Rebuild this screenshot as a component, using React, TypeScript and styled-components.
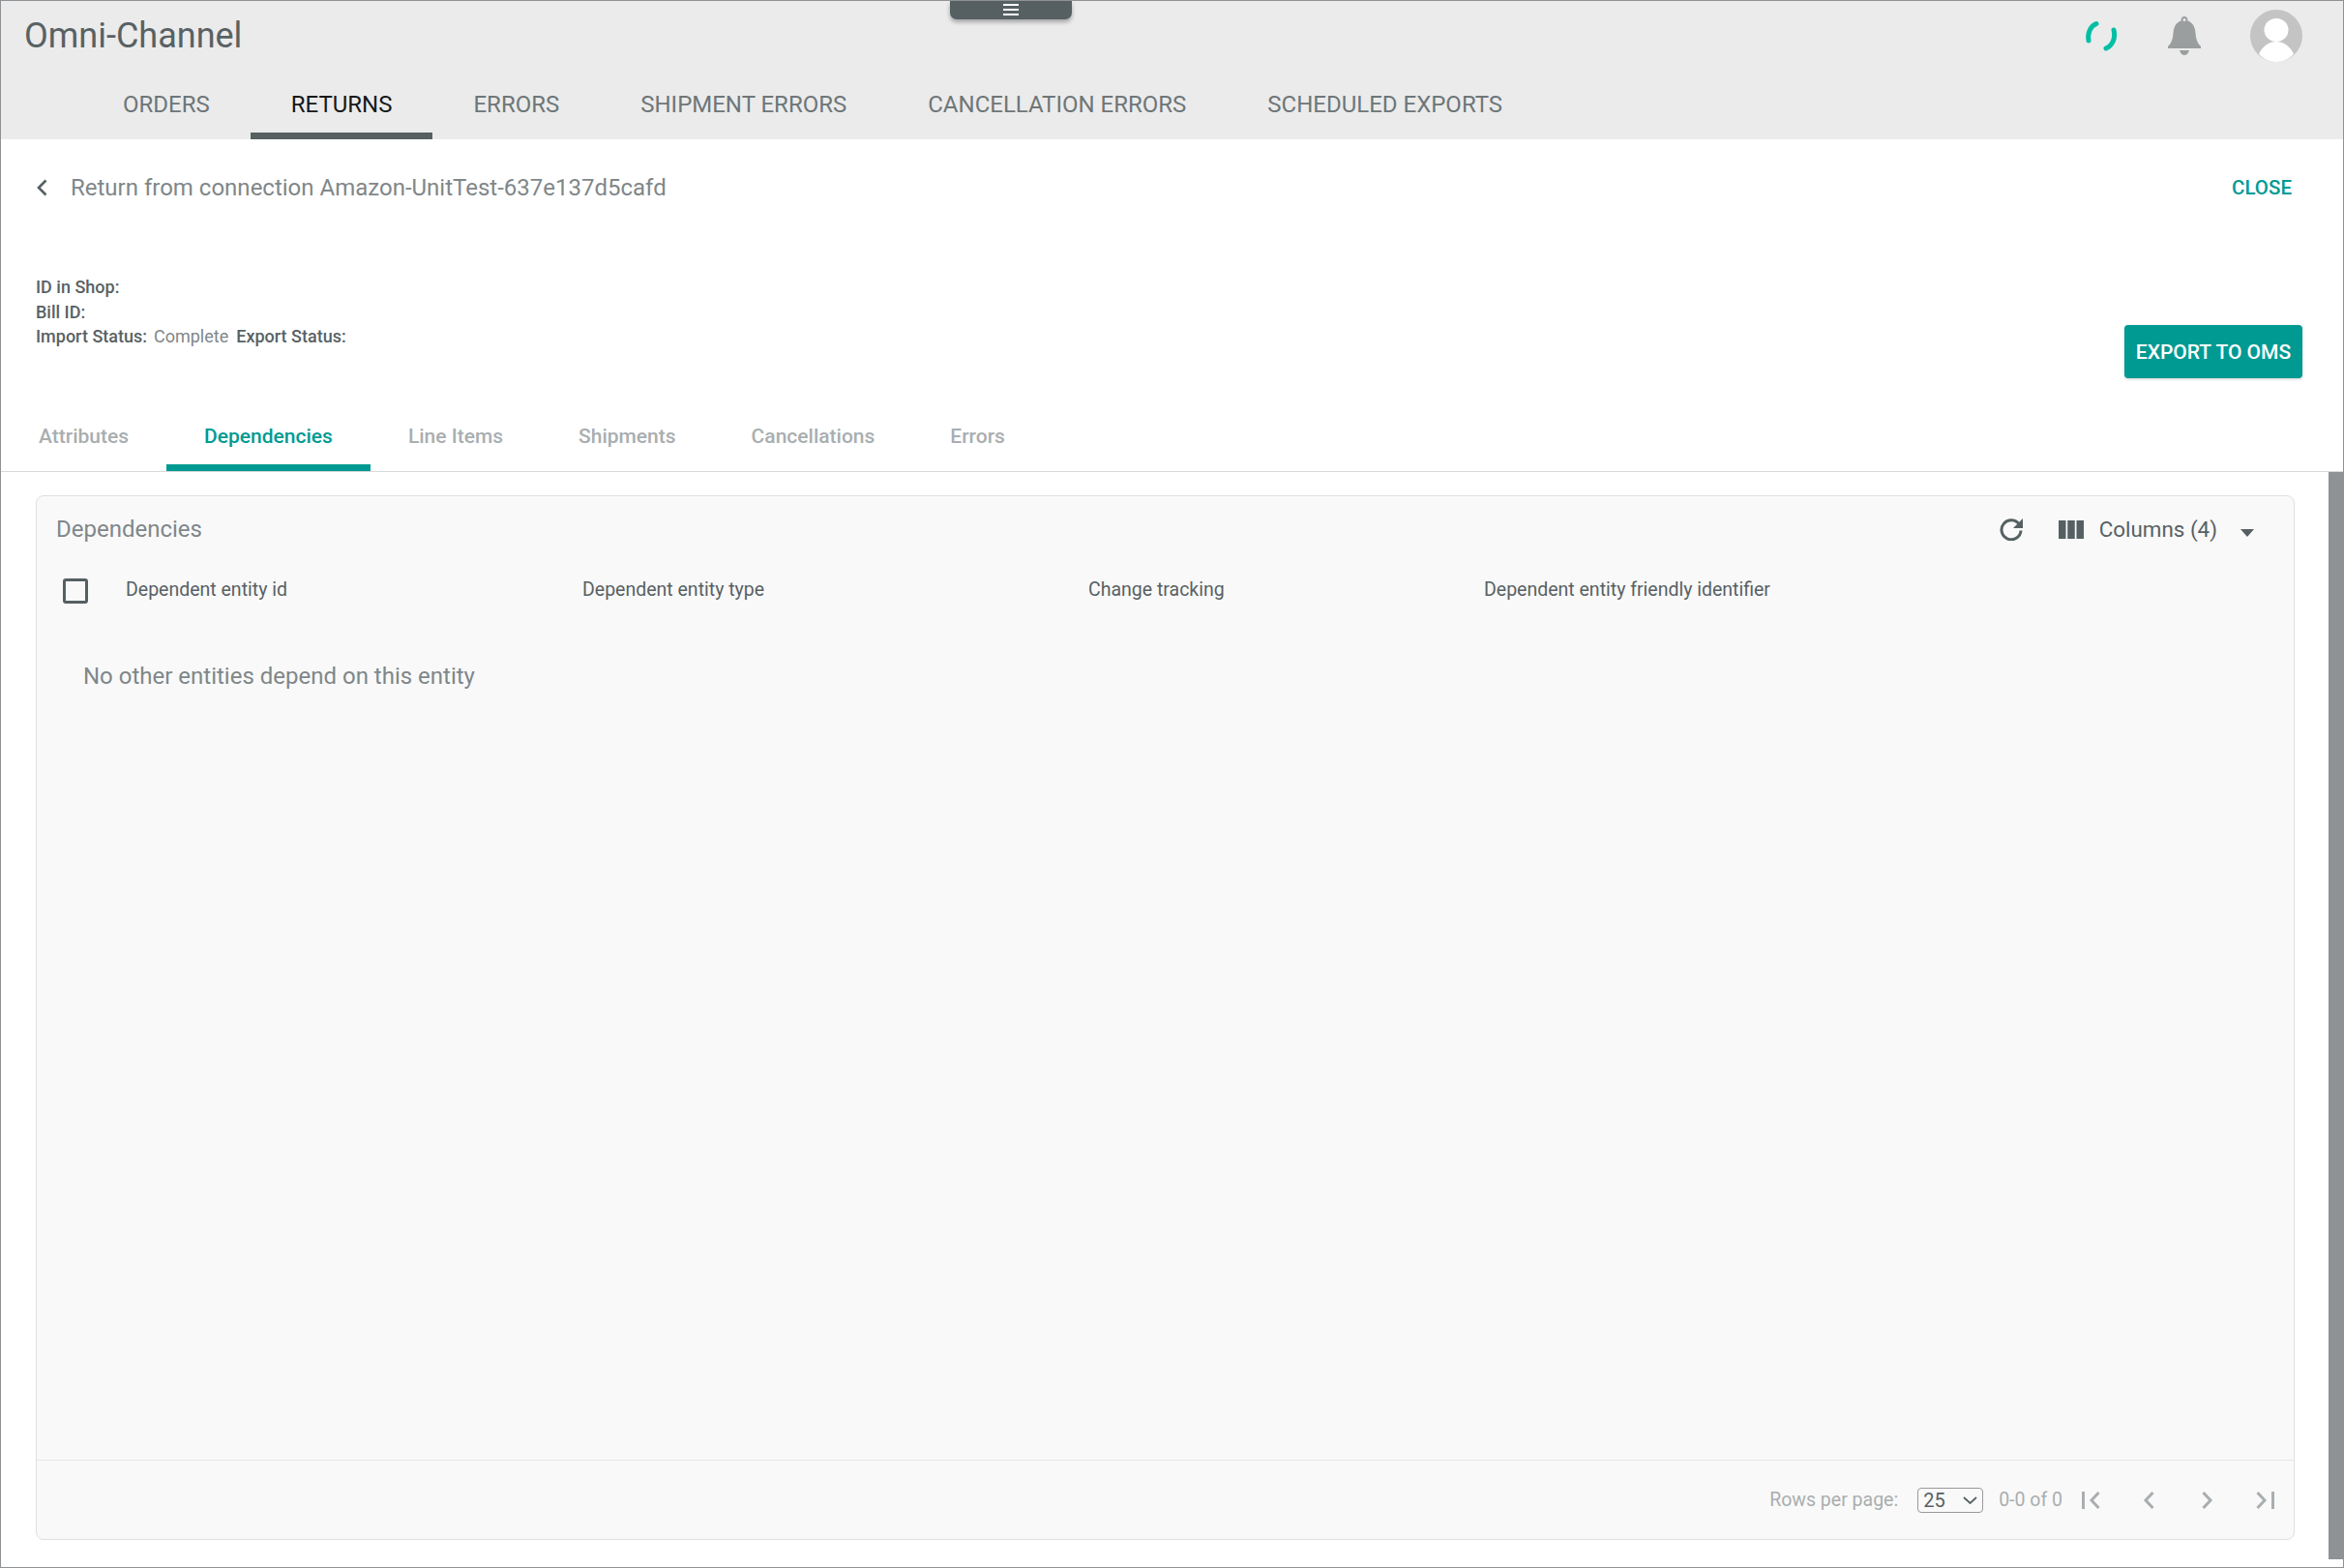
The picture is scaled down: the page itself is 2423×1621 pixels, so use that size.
import styled, { createGlobalStyle } from 'styled-components';

const GlobalStyle = createGlobalStyle`
  html, body {
    margin: 0;
    padding: 0;
    background: #fff;
  }
  body {
    font-family: Roboto, "Liberation Sans", sans-serif;
  }
`;

const Frame = styled.div`
  box-sizing: border-box;
  position: relative;
  width: 2423px;
  height: 1621px;
  border: 1px solid #8f9294;
  display: flex;
  flex-direction: column;
  overflow: hidden;
`;

const Header = styled.header`
  height: 143px;
  background: #ebebeb;
  display: flex;
  flex-direction: column;
  flex: none;
`;

const TopRow = styled.div`
  height: 71px;
  display: flex;
  align-items: center;
  padding: 0 42px 0 24px;
`;

const AppTitle = styled.div`
  font-size: 36px;
  color: #586164;
`;

const MenuHandle = styled.button`
  position: absolute;
  top: 0;
  left: 981px;
  width: 126px;
  height: 19px;
  padding: 3px 0 0;
  border: none;
  border-radius: 0 0 7px 7px;
  background: #566063;
  box-shadow: 0 3px 4px rgba(0, 0, 0, 0.3);
  display: flex;
  flex-direction: column;
  align-items: center;
  gap: 3px;
  box-sizing: border-box;
`;

const MenuLine = styled.span`
  display: block;
  width: 16px;
  height: 2px;
  background: #fff;
`;

const HeaderIcons = styled.div`
  margin-left: auto;
  display: flex;
  align-items: center;
`;

const NavBar = styled.nav`
  height: 72px;
  display: flex;
  padding-left: 84px;
`;

const NavTab = styled.div<{ $active?: boolean }>`
  box-sizing: border-box;
  height: 72px;
  padding: 7px 42px 0;
  display: flex;
  align-items: center;
  font-size: 24px;
  text-transform: uppercase;
  color: ${({ $active }) => ($active ? '#16181a' : '#6e7678')};
  border-bottom: 7px solid ${({ $active }) => ($active ? '#566063' : 'transparent')};
`;

const DetailHead = styled.div`
  box-sizing: border-box;
  height: 70px;
  padding: 30px 53px 0 36px;
  display: flex;
  align-items: center;
  flex: none;
`;

const BackTitle = styled.div`
  margin-left: 24px;
  font-size: 24px;
  color: #7f8789;
`;

const CloseLink = styled.div`
  margin-left: auto;
  font-size: 20.5px;
  font-weight: 500;
  color: #009a93;
`;

const SummaryRow = styled.div`
  box-sizing: border-box;
  height: 177px;
  padding: 70px 42px 0 36px;
  display: flex;
  justify-content: space-between;
  flex: none;
`;

const InfoLines = styled.div`
  display: flex;
  flex-direction: column;
`;

const InfoLine = styled.div`
  height: 25.6px;
  display: flex;
  align-items: center;
  font-size: 18px;
  color: #7f8789;
`;

const InfoLabel = styled.span`
  font-weight: 500;
  color: #586164;
  margin-right: 7px;
`;

const InfoValue = styled.span`
  margin-right: 8px;
`;

const ExportButton = styled.button`
  align-self: flex-end;
  width: 184px;
  height: 55px;
  border: none;
  border-radius: 4px;
  background: #009a93;
  box-shadow: 0 1px 3px rgba(0, 0, 0, 0.2);
  color: #fff;
  font-family: inherit;
  font-size: 21px;
  font-weight: 500;
  padding: 0;
`;

const SubTabs = styled.div`
  box-sizing: border-box;
  height: 97px;
  display: flex;
  align-items: flex-end;
  border-bottom: 1px solid #d8d8d8;
  flex: none;
`;

const SubTab = styled.div<{ $active?: boolean }>`
  box-sizing: border-box;
  height: 73px;
  padding: 8px 39px 0;
  display: flex;
  align-items: center;
  font-size: 21px;
  font-weight: 500;
  color: ${({ $active }) => ($active ? '#009a93' : '#a9aeb0')};
  border-bottom: 7px solid ${({ $active }) => ($active ? '#009a93' : 'transparent')};
`;

const Content = styled.div`
  flex: 1;
  min-height: 0;
  display: flex;
`;

const Main = styled.main`
  box-sizing: border-box;
  flex: 1;
  min-width: 0;
  padding: 24px 35px 28px 36px;
  display: flex;
`;

const ScrollRail = styled.div`
  width: 15px;
  margin-bottom: 8px;
  background: #8f9294;
  flex: none;
`;

const Card = styled.section`
  flex: 1;
  display: flex;
  flex-direction: column;
  background: #f9f9f9;
  border: 1px solid #e0e0e0;
  border-radius: 8px;
`;

const CardTop = styled.div`
  box-sizing: border-box;
  height: 70px;
  padding: 0 41px 2px 20px;
  display: flex;
  align-items: center;
  flex: none;
`;

const CardTitle = styled.div`
  font-size: 24px;
  color: #7f8789;
`;

const CardTools = styled.div`
  margin-left: auto;
  display: flex;
  align-items: center;
`;

const ColumnsLabel = styled.span`
  margin: 0 24px 0 16px;
  font-size: 22.4px;
  color: #586164;
`;

const TableHead = styled.div`
  height: 54px;
  padding-left: 27px;
  display: grid;
  grid-template-columns: 65px 472px 523px 409px 1fr;
  align-items: center;
  flex: none;
`;

const CheckBox = styled.div`
  box-sizing: border-box;
  width: 26px;
  height: 26px;
  border: 3px solid #566063;
  border-radius: 3px;
  margin-top: 2px;
`;

const HeadCell = styled.div`
  font-size: 19.5px;
  padding-bottom: 1px;
  color: #586164;
`;

const EmptyMessage = styled.div`
  flex: 1;
  padding: 45px 0 0 48px;
  font-size: 24px;
  line-height: 34px;
  color: #7f8789;
`;

const CardFooter = styled.div`
  box-sizing: border-box;
  height: 82px;
  padding-right: 20px;
  border-top: 1px solid #e8e8e8;
  display: flex;
  align-items: center;
  justify-content: flex-end;
  font-size: 19.5px;
  color: #a9aeb0;
  flex: none;
`;

const SelectWrap = styled.div`
  position: relative;
  width: 68px;
  height: 26px;
  margin: 0 16px 0 20px;
`;

const RowsSelect = styled.select`
  box-sizing: border-box;
  width: 100%;
  height: 100%;
  appearance: none;
  padding: 0 0 0 5px;
  border: 1px solid #999;
  border-radius: 4px;
  background: #f9f9f9;
  font-family: inherit;
  font-size: 20px;
  color: #586164;
`;

const SelectArrow = styled.svg`
  position: absolute;
  top: 9px;
  left: 47px;
  pointer-events: none;
`;

const PagerIcons = styled.div`
  margin-left: 20px;
  display: flex;
  align-items: center;
  gap: 49px;
`;

const PagerGroup = styled.div`
  display: flex;
  align-items: center;
  gap: 44px;
`;

function Spinner() {
  return (
    <svg width="34" height="32" viewBox="0 0 34 32" fill="none" stroke="#00bfa5" strokeWidth="5" strokeLinecap="round" style={{ marginRight: 52 }}>
      <path d="M12 3.500 C6 6 2.500 13 4 21" />
      <path d="M30 10 C32 18 29 26 22 29" />
    </svg>
  );
}

function Bell() {
  return (
    <svg width="34" height="40" viewBox="0 0 34 40" fill="#9a9e9e" style={{ marginRight: 51 }}>
      <path d="M17 0a3.500 3.500 0 0 1 3.300 4.600C26 6.500 28 11.500 28.500 17c.5 6 1.500 10 5.500 14v2H0v-2c4-4 5-8 5.500-14C6 11.500 8 6.500 13.700 4.600A3.500 3.500 0 0 1 17 0zm0 2a1.500 1.500 0 0 0 0 3 1.500 1.500 0 0 0 0-3z" />
      <path d="M12 35h10c-.8 3-2.800 5-5 5s-4.200-2-5-5z" />
    </svg>
  );
}

function Avatar() {
  return (
    <svg width="54" height="54" viewBox="0 0 54 54">
      <circle cx="27" cy="27" r="27" fill="#c4c4c4" />
      <ellipse cx="27" cy="21" rx="12.500" ry="12" fill="#fff" />
      <path d="M9 46 C13 37 20 33 27 33 C34 33 41 37 45 46 C40 51 34 54 27 54 C20 54 14 51 9 46z" fill="#fff" />
    </svg>
  );
}

function BackChevron() {
  return (
    <svg width="12" height="18" viewBox="0 0 12 18" fill="none" stroke="#566063" strokeWidth="2.600">
      <path d="M10.500 1.500 3 9l7.500 7.500" />
    </svg>
  );
}

function RefreshIcon() {
  return (
    <svg width="24" height="24" viewBox="0 0 24 24" fill="none" style={{ marginRight: 37 }}>
      <path d="M20.500 7.500A10 10 0 1 0 22 13.500" stroke="#566063" strokeWidth="3" />
      <path d="M24 1v10H14z" fill="#566063" />
    </svg>
  );
}

function ColumnsIcon() {
  return (
    <svg width="26" height="19" viewBox="0 0 26 19" fill="#566063">
      <rect x="0" width="7.500" height="19" />
      <rect x="9.250" width="7.500" height="19" />
      <rect x="18.500" width="7.500" height="19" />
    </svg>
  );
}

function Caret() {
  return (
    <svg width="14" height="8" viewBox="0 0 14 8" fill="#566063" style={{ marginTop: 8 }}>
      <path d="M0 0h14L7 8z" />
    </svg>
  );
}

function PagerIcon({ kind }: { kind: 'first' | 'prev' | 'next' | 'last' }) {
  const paths = {
    first: ['M1.500 0v18', 'M17.500 1 10 9l7.500 8'],
    prev: ['M10.500 1 3 9l7.500 8'],
    next: ['M1.500 1 9 9l-7.500 8'],
    last: ['M17.500 0v18', 'M1.500 1 9 9l-7.500 8'],
  };
  const wide = kind === 'first' || kind === 'last';
  return (
    <svg width={wide ? 19 : 12} height="18" viewBox={`0 0 ${wide ? 19 : 12} 18`} fill="none" stroke="#a9aeb0" strokeWidth="3">
      {paths[kind].map((d) => (
        <path key={d} d={d} />
      ))}
    </svg>
  );
}

const navTabs = ['Orders', 'Returns', 'Errors', 'Shipment Errors', 'Cancellation Errors', 'Scheduled Exports'];
const subTabs = ['Attributes', 'Dependencies', 'Line Items', 'Shipments', 'Cancellations', 'Errors'];
const columns = ['Dependent entity id', 'Dependent entity type', 'Change tracking', 'Dependent entity friendly identifier'];

export default function App() {
  return (
    <>
      <GlobalStyle />
      <Frame>
        <Header>
          <TopRow>
            <AppTitle>Omni-Channel</AppTitle>
            <HeaderIcons>
              <Spinner />
              <Bell />
              <Avatar />
            </HeaderIcons>
          </TopRow>
          <NavBar>
            {navTabs.map((tab) => (
              <NavTab key={tab} $active={tab === 'Returns'}>
                {tab}
              </NavTab>
            ))}
          </NavBar>
        </Header>
        <MenuHandle aria-label="Menu">
          <MenuLine />
          <MenuLine />
          <MenuLine />
        </MenuHandle>

        <DetailHead>
          <BackChevron />
          <BackTitle>Return from connection Amazon-UnitTest-637e137d5cafd</BackTitle>
          <CloseLink>CLOSE</CloseLink>
        </DetailHead>

        <SummaryRow>
          <InfoLines>
            <InfoLine>
              <InfoLabel>ID in Shop:</InfoLabel>
            </InfoLine>
            <InfoLine>
              <InfoLabel>Bill ID:</InfoLabel>
            </InfoLine>
            <InfoLine>
              <InfoLabel>Import Status:</InfoLabel>
              <InfoValue>Complete</InfoValue>
              <InfoLabel>Export Status:</InfoLabel>
            </InfoLine>
          </InfoLines>
          <ExportButton>EXPORT TO OMS</ExportButton>
        </SummaryRow>

        <SubTabs>
          {subTabs.map((tab) => (
            <SubTab key={tab} $active={tab === 'Dependencies'}>
              {tab}
            </SubTab>
          ))}
        </SubTabs>

        <Content>
          <Main>
            <Card>
              <CardTop>
                <CardTitle>Dependencies</CardTitle>
                <CardTools>
                  <RefreshIcon />
                  <ColumnsIcon />
                  <ColumnsLabel>Columns (4)</ColumnsLabel>
                  <Caret />
                </CardTools>
              </CardTop>
              <TableHead>
                <CheckBox />
                {columns.map((col) => (
                  <HeadCell key={col}>{col}</HeadCell>
                ))}
              </TableHead>
              <EmptyMessage>No other entities depend on this entity</EmptyMessage>
              <CardFooter>
                <span>Rows per page:</span>
                <SelectWrap>
                  <RowsSelect defaultValue="25">
                    <option value="25">25</option>
                    <option value="50">50</option>
                  </RowsSelect>
                  <SelectArrow width="15" height="8" viewBox="0 0 15 8" fill="none" stroke="#566063" strokeWidth="1.800">
                    <path d="M1 1l6.500 6L14 1" />
                  </SelectArrow>
                </SelectWrap>
                <span>0-0 of 0</span>
                <PagerIcons>
                  <PagerGroup>
                    <PagerIcon kind="first" />
                    <PagerIcon kind="prev" />
                  </PagerGroup>
                  <PagerGroup>
                    <PagerIcon kind="next" />
                    <PagerIcon kind="last" />
                  </PagerGroup>
                </PagerIcons>
              </CardFooter>
            </Card>
          </Main>
          <ScrollRail />
        </Content>
      </Frame>
    </>
  );
}
